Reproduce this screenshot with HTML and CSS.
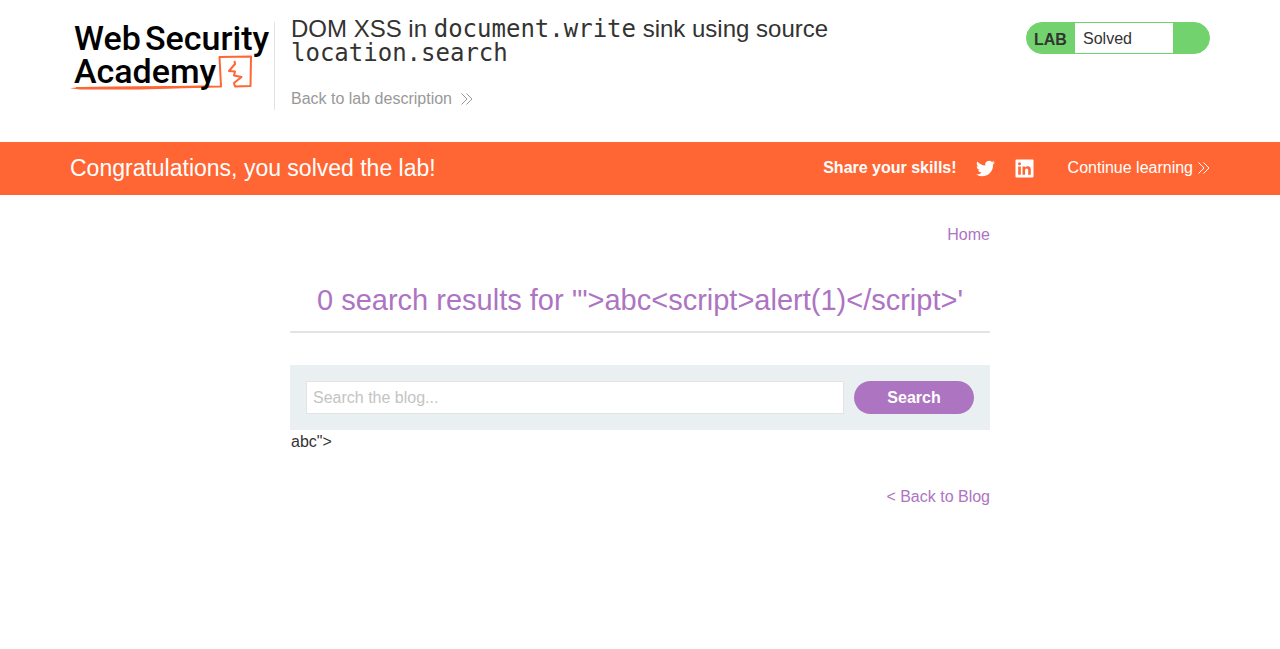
FILE: index.html
```html
<!DOCTYPE html>
<html lang="en">
<head>
<meta charset="utf-8">
<title>DOM XSS in document.write sink using source location.search</title>
<link rel="stylesheet" href="styles.css">
</head>
<body>
<header class="lab-header">
  <div class="container header-row">
    <a class="logo" href="#" aria-label="Web Security Academy">
      <svg width="204" height="72" viewBox="0 0 204 72">
        <path class="logo-line" d="M6 66 L10 66 L70 65.500 L151 64.500 L149.500 35 L181 34.500 L180.500 64 L165 64.500 L164 61 L171.500 55 L164 53.500 L165 49.500 L159 49 L165 42 L164.500 39"/>
        <path class="logo-fill" d="M0 66.300 L10 65 L70 64.500 L140 63.500 V65.500 L70 67.500 L10 67.500 Z"/>
        <g class="logo-text">
          <text x="4" y="28">Web</text>
          <text x="75" y="28">Security</text>
          <text x="4" y="61">Academy</text>
        </g>
      </svg>
    </a>
    <div class="title-block">
      <h1 class="lab-title">DOM XSS in <code>document.write</code> sink using source <code>location.search</code></h1>
      <a class="back-link" href="#">Back to lab description
        <svg class="chevrons" width="12" height="12" viewBox="0 0 12 12"><path d="M0.500 0.500 L6 6 L0.500 11.500 M5.500 0.500 L11 6 L5.500 11.500"/></svg>
      </a>
    </div>
    <div class="lab-status">
      <span class="status-tag">LAB</span>
      <span class="status-text">Solved</span>
    </div>
  </div>
</header>
<section class="banner">
  <div class="container banner-row">
    <h2 class="banner-title">Congratulations, you solved the lab!</h2>
    <span class="share-label">Share your skills!</span>
    <a class="share" href="#" aria-label="Share on Twitter"><svg width="19" height="19" viewBox="0 0 24 24"><path d="M23.950 4.570a10 10 0 0 1-2.820.770 4.960 4.960 0 0 0 2.160-2.720c-.950.550-2 .950-3.130 1.180a4.920 4.920 0 0 0-8.380 4.480C7.690 8.090 4.070 6.130 1.640 3.160a4.820 4.820 0 0 0-.670 2.480c0 1.710.870 3.210 2.190 4.100a4.900 4.900 0 0 1-2.230-.620v.060a4.920 4.920 0 0 0 3.950 4.830 5 5 0 0 1-2.210.080 4.940 4.940 0 0 0 4.600 3.420A9.870 9.870 0 0 1 0 19.540a13.990 13.990 0 0 0 7.550 2.210c9.050 0 14-7.500 14-13.980 0-.210 0-.420-.020-.630a9.940 9.940 0 0 0 2.420-2.570z"/></svg></a>
    <a class="share" href="#" aria-label="Share on LinkedIn"><svg width="19" height="19" viewBox="0 0 19 19"><path fill-rule="evenodd" d="M1.500 0.500h16a1 1 0 0 1 1 1v16a1 1 0 0 1-1 1h-16a1 1 0 0 1-1-1v-16a1 1 0 0 1 1-1zM3.200 7.400v8.300h2.600V7.400zM4.500 3.200a1.500 1.500 0 1 0 0 3 1.500 1.500 0 0 0 0-3zM7.500 7.400v8.300h2.600v-4.200c0-1.200.4-2.100 1.600-2.100s1.500.9 1.500 2.200v4.100h2.600v-4.600c0-2.400-.7-3.900-3.100-3.900-1.300 0-2.200.6-2.600 1.400V7.400z"/></svg></a>
    <a class="continue" href="#">Continue learning
      <svg class="chevrons" width="12" height="12" viewBox="0 0 12 12"><path d="M0.500 0.500 L6 6 L0.500 11.500 M5.500 0.500 L11 6 L5.500 11.500"/></svg>
    </a>
  </div>
</section>
<main class="blog">
  <nav class="top-links"><a href="#">Home</a></nav>
  <h2 class="results-title">0 search results for '"&gt;abc&lt;script&gt;alert(1)&lt;/script&gt;'</h2>
  <form class="search">
    <input class="search-input" type="text" placeholder="Search the blog..." aria-label="Search the blog">
    <button class="search-button" type="submit">Search</button>
  </form>
  <p class="output">abc"&gt;</p>
  <div class="bottom-links"><a href="#">&lt; Back to Blog</a></div>
</main>
</body>
</html>
```
FILE: styles.css
```css
* { box-sizing: border-box; }
body {
  margin: 0;
  background: #fff;
  color: #333332;
  font: 16px/24px "Liberation Sans", Arial, sans-serif;
}
h1, h2, p { margin: 0; font-weight: 400; }
a { text-decoration: none; }

.container { max-width: 1180px; margin: 0 auto; padding: 0 20px; }
.lab-header { padding-bottom: 31px; }
.header-row { display: flex; align-items: flex-start; }
.logo { flex: none; margin-top: 22px; height: 88px; border-right: 1px solid #e3e3e3; }
.logo svg { display: block; }
.logo-text { font: 500 34px Roboto, sans-serif; fill: #000; }
.logo-line { fill: none; stroke: #ff6633; stroke-width: 2; stroke-linejoin: round; }
.logo-fill { fill: #ff6633; }
.title-block { flex: 1; max-width: 580px; padding: 17px 0 0 16px; }
.lab-title { font-size: 24px; line-height: 24px; }
.lab-title code { font-family: "DejaVu Sans Mono", monospace; font-size: 24px; }
.back-link { display: flex; align-items: center; gap: 9px; margin-top: 22px; color: #999; }
.chevrons { fill: none; stroke: currentColor; stroke-width: 1; }
.lab-status {
  display: flex;
  width: 184px;
  height: 32px;
  margin: 22px 0 0 auto;
  border: 1px solid #72d36e;
  border-radius: 16px;
  background: #72d36e;
  overflow: hidden;
  line-height: 32px;
}
.status-tag { width: 48px; padding-left: 7px; font-weight: 700; line-height: 34px; }
.status-text { width: 98px; padding-left: 8px; background: #fff; }

.banner { background: #ff6633; color: #fff; }
.banner-row { display: flex; align-items: center; min-height: 53px; padding-bottom: 1px; }
.banner-title { flex: 1; font-size: 23px; line-height: 28px; }
.share-label { margin-right: 19px; font-weight: 700; }
.share { display: flex; margin-right: 20px; fill: #fff; }
.continue { display: flex; align-items: center; gap: 5px; margin-left: 14px; color: #fff; }

.blog { max-width: 700px; margin: 0 auto; padding-top: 28px; }
.blog a { color: #ad74c2; }
.top-links, .bottom-links { text-align: right; }
.results-title {
  margin-top: 33px;
  padding-bottom: 11px;
  border-bottom: 2px solid #e3e3e3;
  color: #ad74c2;
  font-size: 29px;
  line-height: 40px;
  text-align: center;
}
.search { display: flex; gap: 10px; margin-top: 32px; padding: 16px; background: #eaeff2; }
.search-input {
  flex: 1;
  min-width: 0;
  height: 33px;
  padding: 0 6px;
  border: 1px solid #e3e3e3;
  background: #fff;
  color: inherit;
  font: inherit;
}
.search-input::placeholder { color: #c4c4c4; opacity: 1; }
.search-button {
  width: 120px;
  height: 33px;
  padding: 0;
  border: 0;
  border-radius: 17px;
  background: #ad74c2;
  color: #fff;
  font: inherit;
  font-weight: 700;
}
.output { padding-left: 1px; }
.bottom-links { margin-top: 31px; }
```
